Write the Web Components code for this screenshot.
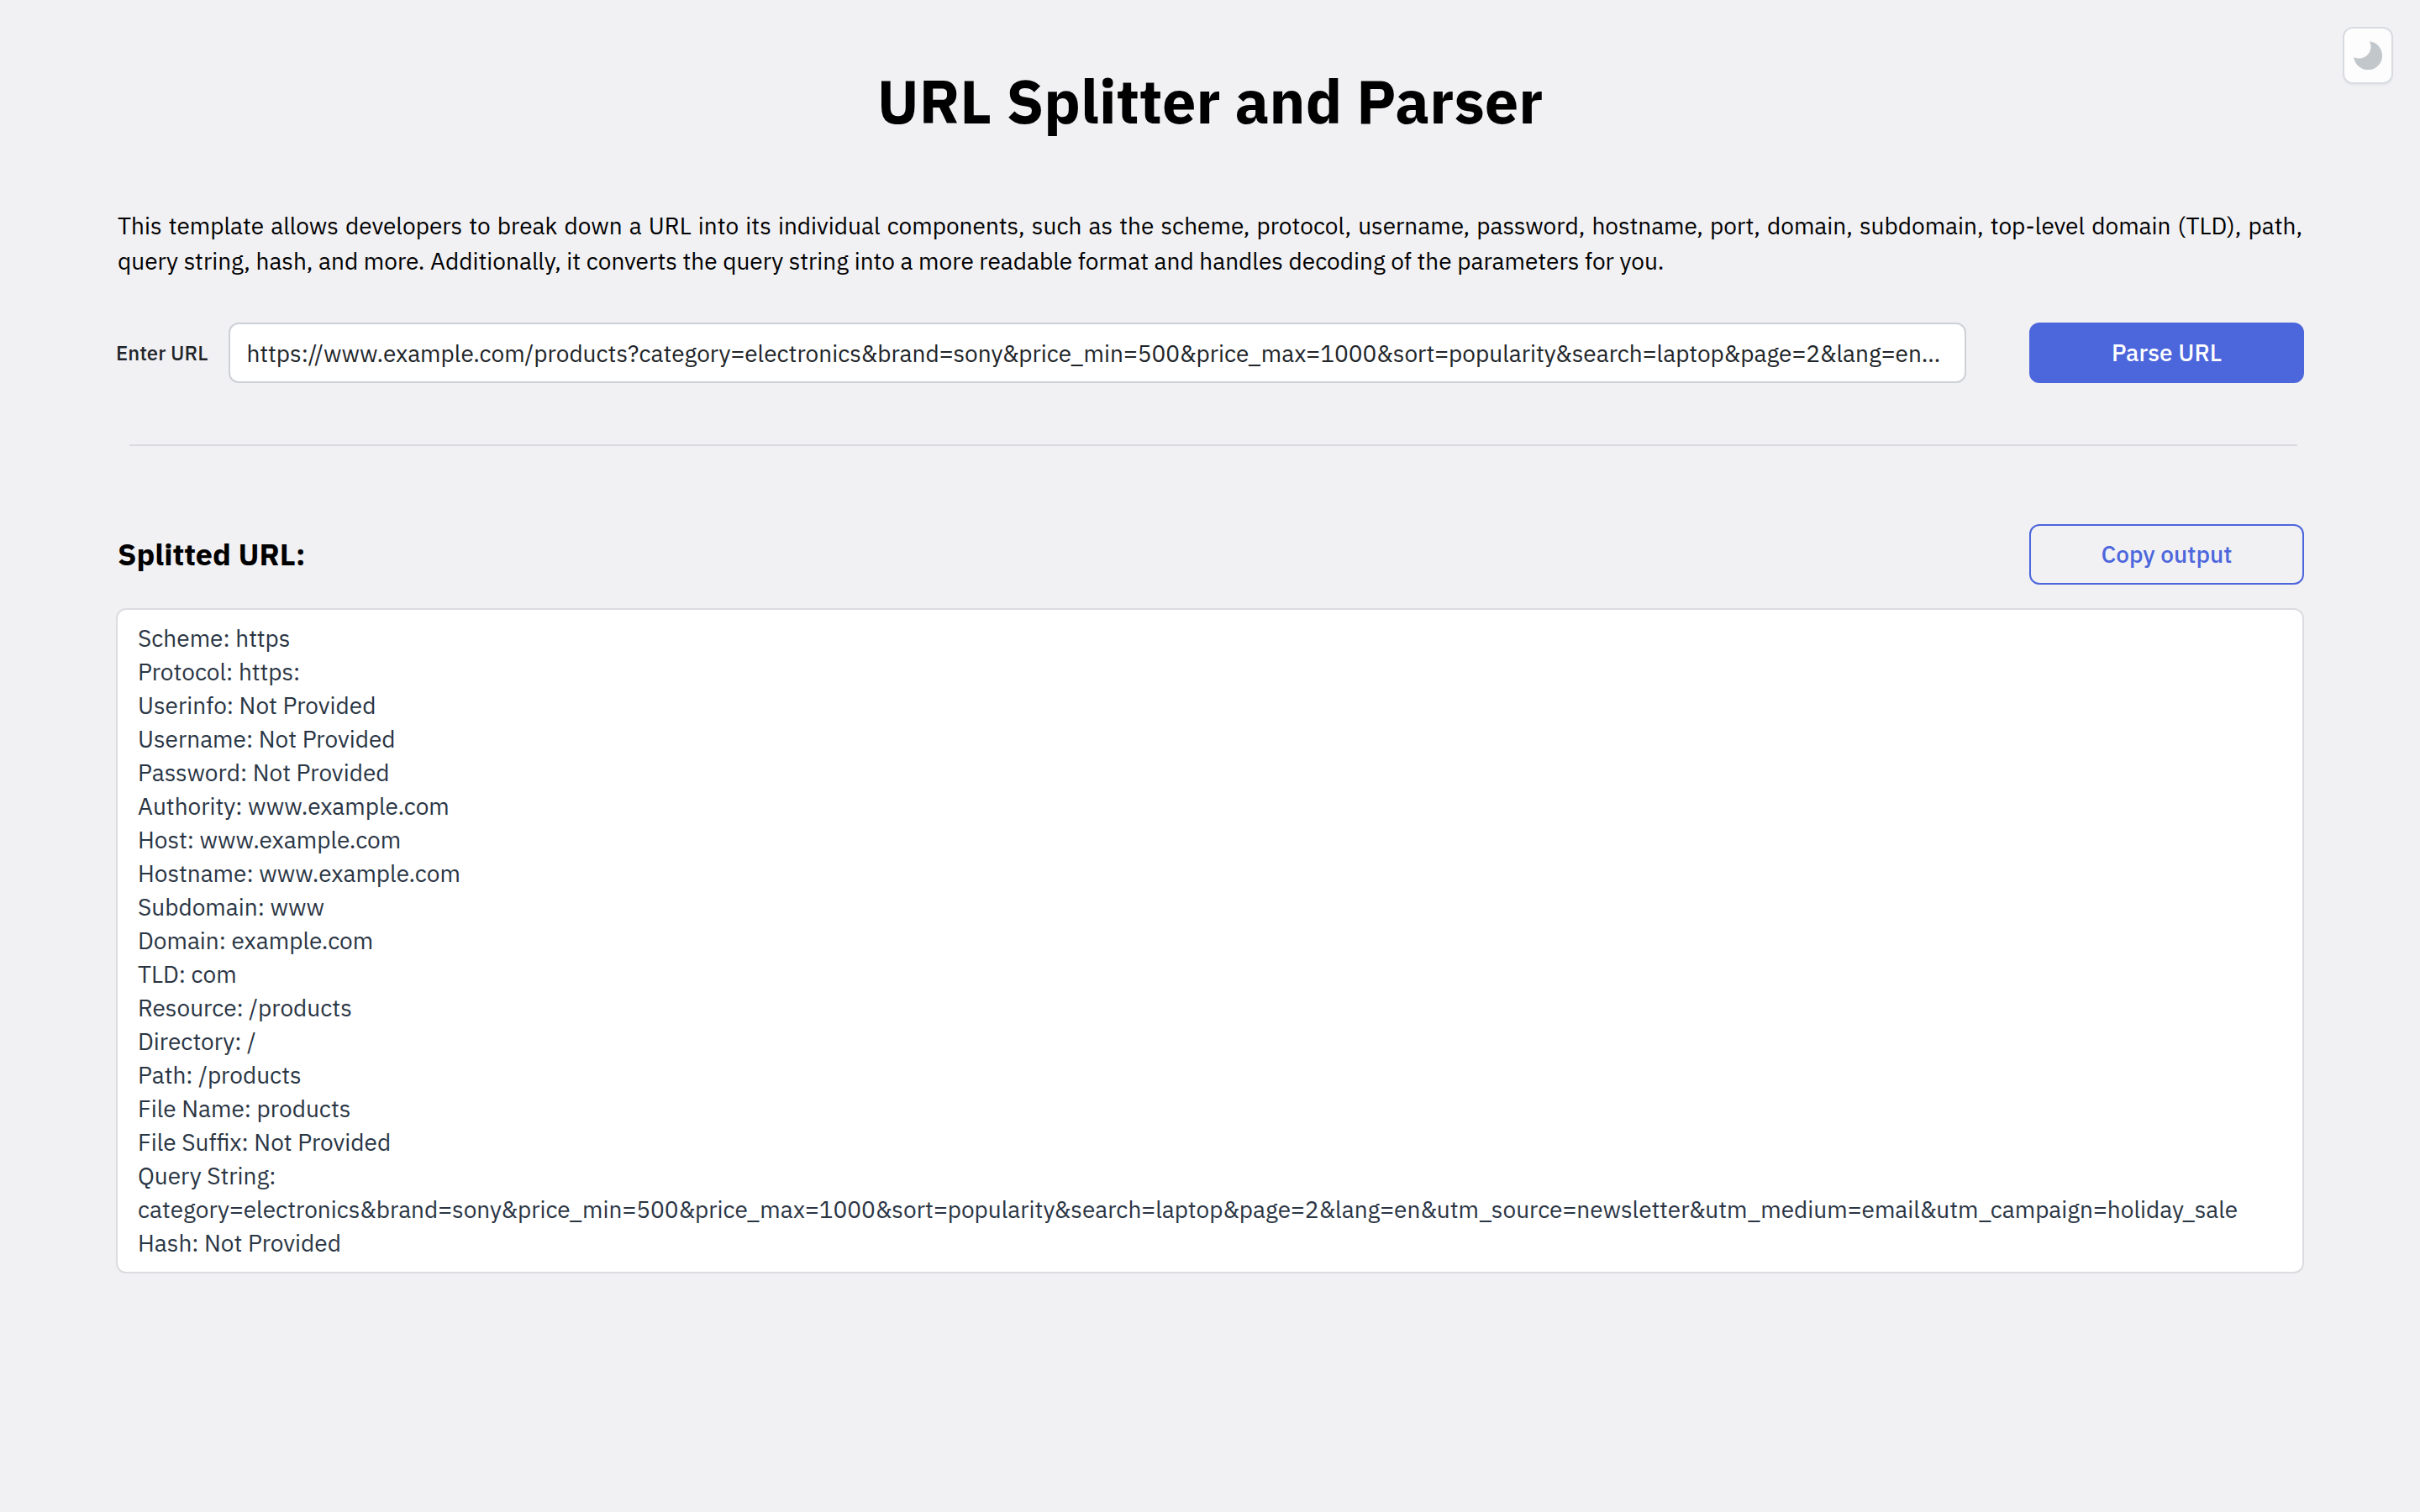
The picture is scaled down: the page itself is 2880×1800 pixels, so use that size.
<!DOCTYPE html>
<html lang="en">
<head>
<meta charset="utf-8">
<meta name="viewport" content="width=device-width, initial-scale=1">
<title>URL Splitter and Parser</title>
<style>
  body {
    margin: 0;
    min-height: 100vh;
    background: #f1f1f4;
    color: #000;
    font: 400 28px/40px "IBM Plex Sans", Roboto, sans-serif;
    --accent: #4c66dc;
    --radius: 12px;
    --control-height: 72px;
  }
</style>
</head>
<body>

<url-splitter-app></url-splitter-app>

<template id="app-template">
  <style>
    :host { display: block; }
    main { padding: 0 138px 80px; }
    .intro { margin: 80px 2px 52px; line-height: 42px; text-align: justify; }
    hr { margin: 73px 8px 93px 16px; border: 0; border-top: 2px solid #d9dade; }
  </style>
  <page-header>URL Splitter and Parser</page-header>
  <main>
    <p class="intro">This template allows developers to break down a URL into its individual components, such as the scheme, protocol, username, password, hostname, port, domain, subdomain, top-level domain (TLD), path, query string, hash, and more. Additionally, it converts the query string into a more readable format and handles decoding of the parameters for you.</p>
    <url-form></url-form>
    <hr>
    <result-panel></result-panel>
  </main>
</template>

<template id="header-template">
  <style>
    :host { display: grid; grid-template-columns: 1fr auto 1fr; align-items: start; padding: 32px 32px 0; }
    h1 { grid-column: 2; margin: 40px 0 0; font-size: 72px; line-height: 96px; font-weight: 700; }
    theme-toggle { justify-self: end; }
  </style>
  <h1><slot></slot></h1>
  <theme-toggle></theme-toggle>
</template>

<template id="toggle-template">
  <style>
    :host { display: block; }
    button {
      display: grid; place-items: center; box-sizing: border-box;
      width: 60px; height: 68px; padding: 0;
      border: 2px solid #d8dce1; border-radius: var(--radius);
      background: #fdfdfd; box-shadow: 0 2px 2px rgba(0, 0, 0, .04);
      cursor: pointer;
    }
    svg { width: 34px; height: 34px; fill: #c1c7cb; }
  </style>
  <button type="button" aria-label="Dark mode">
    <svg viewBox="0 0 34 34" aria-hidden="true"><path d="M19 0.3 A17 17 0 1 1 0.2 19.1 A14 14 0 0 0 19 0.3 Z"/></svg>
  </button>
</template>

<template id="button-template">
  <style>
    :host { display: block; width: 327px; flex: none; }
    button {
      box-sizing: border-box; width: 100%; height: var(--control-height); padding: 0;
      border: 2px solid var(--accent); border-radius: var(--radius);
      background: var(--accent); color: #fff;
      font: inherit; font-weight: 500; cursor: pointer;
    }
    :host([outline]) button { background: transparent; color: var(--accent); }
  </style>
  <button type="button"><slot></slot></button>
</template>

<template id="form-template">
  <style>
    :host { display: block; }
    form { display: flex; align-items: center; }
    label { margin-right: 25px; font-size: 24px; font-weight: 500; color: #212529; }
    input {
      flex: 1; min-width: 0; box-sizing: border-box; height: var(--control-height);
      margin: 0 75px 0 0; padding: 0 19px;
      border: 2px solid #cdd1d7; border-radius: var(--radius);
      background: #fff; color: #212529; font: inherit; text-overflow: ellipsis;
    }
  </style>
  <form>
    <label for="url">Enter URL</label>
    <input id="url" type="text" spellcheck="false" value="https://www.example.com/products?category=electronics&amp;brand=sony&amp;price_min=500&amp;price_max=1000&amp;sort=popularity&amp;search=laptop&amp;page=2&amp;lang=en&amp;utm_source=newsletter&amp;utm_medium=email&amp;utm_campaign=holiday_sale">
    <action-button>Parse URL</action-button>
  </form>
</template>

<template id="result-template">
  <style>
    :host { display: block; }
    header { display: flex; align-items: center; justify-content: space-between; margin-bottom: 28px; }
    h2 { margin: 0 0 0 2px; font-size: 36px; font-weight: 700; }
    output {
      display: block; padding: 14px 24px;
      border: 2px solid #dbdcdf; border-radius: var(--radius);
      background: #fff; color: #2a3544; white-space: pre-wrap;
    }
  </style>
  <header>
    <h2>Splitted URL:</h2>
    <action-button outline>Copy output</action-button>
  </header>
  <output>Scheme: https
Protocol: https:
Userinfo: Not Provided
Username: Not Provided
Password: Not Provided
Authority: www.example.com
Host: www.example.com
Hostname: www.example.com
Subdomain: www
Domain: example.com
TLD: com
Resource: /products
Directory: /
Path: /products
File Name: products
File Suffix: Not Provided
Query String: category=electronics&amp;brand=sony&amp;price_min=500&amp;price_max=1000&amp;sort=popularity&amp;search=laptop&amp;page=2&amp;lang=en&amp;utm_source=newsletter&amp;utm_medium=email&amp;utm_campaign=holiday_sale
Hash: Not Provided</output>
</template>

<script>
  const define = (name, templateId) => customElements.define(name, class extends HTMLElement {
    constructor() {
      super();
      this.attachShadow({ mode: 'open' })
        .append(document.getElementById(templateId).content.cloneNode(true));
    }
  });
  define('theme-toggle', 'toggle-template');
  define('action-button', 'button-template');
  define('page-header', 'header-template');
  define('url-form', 'form-template');
  define('result-panel', 'result-template');
  define('url-splitter-app', 'app-template');
</script>
</body>
</html>
